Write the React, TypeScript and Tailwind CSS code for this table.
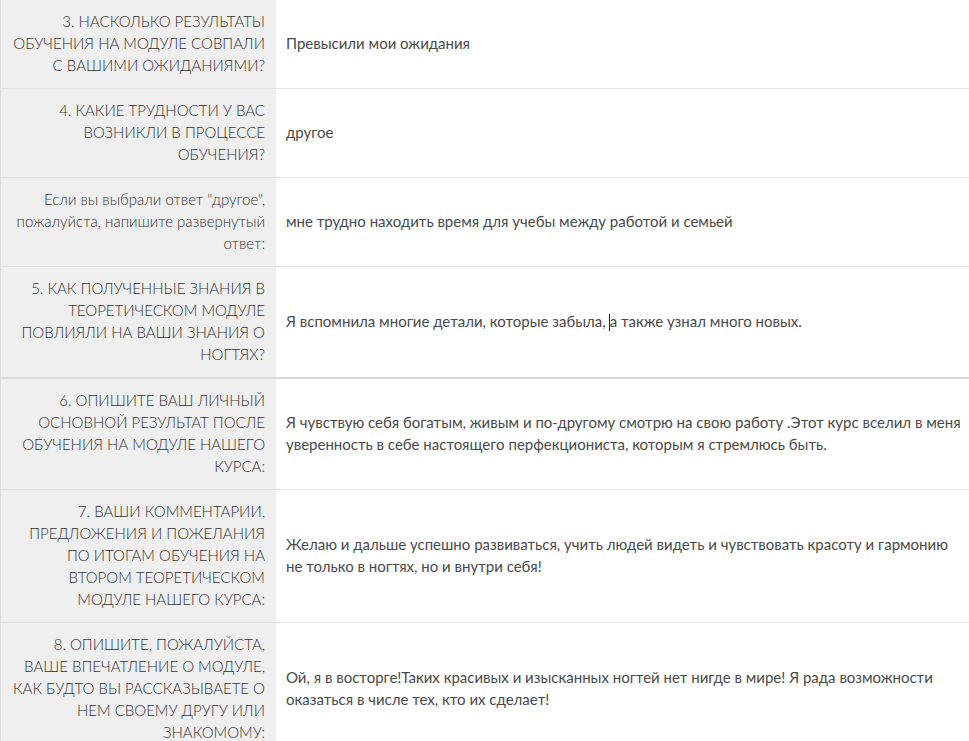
const rows: { q: string[]; a: React.ReactNode[]; thick?: boolean }[] = [
  {
    q: ["3. НАСКОЛЬКО РЕЗУЛЬТАТЫ", "ОБУЧЕНИЯ НА МОДУЛЕ СОВПАЛИ", "С ВАШИМИ ОЖИДАНИЯМИ?"],
    a: ["Превысили мои ожидания"],
  },
  {
    q: ["4. КАКИЕ ТРУДНОСТИ У ВАС", "ВОЗНИКЛИ В ПРОЦЕССЕ", "ОБУЧЕНИЯ?"],
    a: ["другое"],
  },
  {
    q: ['Если вы выбрали ответ "другое",', "пожалуйста, напишите развернутый", "ответ:"],
    a: ["мне трудно находить время для учебы между работой и семьей"],
  },
  {
    q: ["5. КАК ПОЛУЧЕННЫЕ ЗНАНИЯ В", "ТЕОРЕТИЧЕСКОМ МОДУЛЕ", "ПОВЛИЯЛИ НА ВАШИ ЗНАНИЯ О", "НОГТЯХ?"],
    a: [
      <>
        Я вспомнила многие детали, которые забыла,
        <span className="inline-block w-px h-[17px] bg-[#222] align-[-4px] ml-[3px]" />
        а также узнал много новых.
      </>,
    ],
    thick: true,
  },
  {
    q: ["6. ОПИШИТЕ ВАШ ЛИЧНЫЙ", "ОСНОВНОЙ РЕЗУЛЬТАТ ПОСЛЕ", "ОБУЧЕНИЯ НА МОДУЛЕ НАШЕГО", "КУРСА:"],
    a: [
      "Я чувствую себя богатым, живым и по-другому смотрю на свою работу .Этот курс вселил в меня",
      "уверенность в себе настоящего перфекциониста, которым я стремлюсь быть.",
    ],
  },
  {
    q: ["7. ВАШИ КОММЕНТАРИИ,", "ПРЕДЛОЖЕНИЯ И ПОЖЕЛАНИЯ", "ПО ИТОГАМ ОБУЧЕНИЯ НА", "ВТОРОМ ТЕОРЕТИЧЕСКОМ", "МОДУЛЕ НАШЕГО КУРСА:"],
    a: [
      "Желаю и дальше успешно развиваться, учить людей видеть и чувствовать красоту и гармонию",
      "не только в ногтях, но и внутри себя!",
    ],
  },
  {
    q: ["8. ОПИШИТЕ, ПОЖАЛУЙСТА,", "ВАШЕ ВПЕЧАТЛЕНИЕ О МОДУЛЕ,", "КАК БУДТО ВЫ РАССКАЗЫВАЕТЕ О", "НЕМ СВОЕМУ ДРУГУ ИЛИ", "ЗНАКОМОМУ:"],
    a: [
      "Ой, я в восторге!Таких красивых и изысканных ногтей нет нигде в мире! Я рада возможности",
      "оказаться в числе тех, кто их сделает!",
    ],
  },
];

export default function App() {
  return (
    <div className="w-[969px] h-[741px] overflow-hidden bg-white font-['Lato','Liberation_Sans',sans-serif] text-[15px] leading-[22px]">
      {rows.map((r, i) => (
        <div
          key={i}
          className={`flex ${r.thick ? "border-b-2 border-[#d9d9d9]" : "border-b border-[#e2e2e2]"}`}
        >
          <div className="w-[276px] shrink-0 bg-[#efefef] border-l border-[#dcdcdc] pt-[10px] pb-[12px] pr-[11px] text-right text-[#333] font-light whitespace-nowrap">
            {r.q.map((l, j) => (
              <div key={j}>{l}</div>
            ))}
          </div>
          <div className="flex-1 flex flex-col justify-center pl-[10px] pb-[2px] text-[#4a4a4a] whitespace-nowrap">
            {r.a.map((l, j) => (
              <div key={j}>{l}</div>
            ))}
          </div>
        </div>
      ))}
    </div>
  );
}
